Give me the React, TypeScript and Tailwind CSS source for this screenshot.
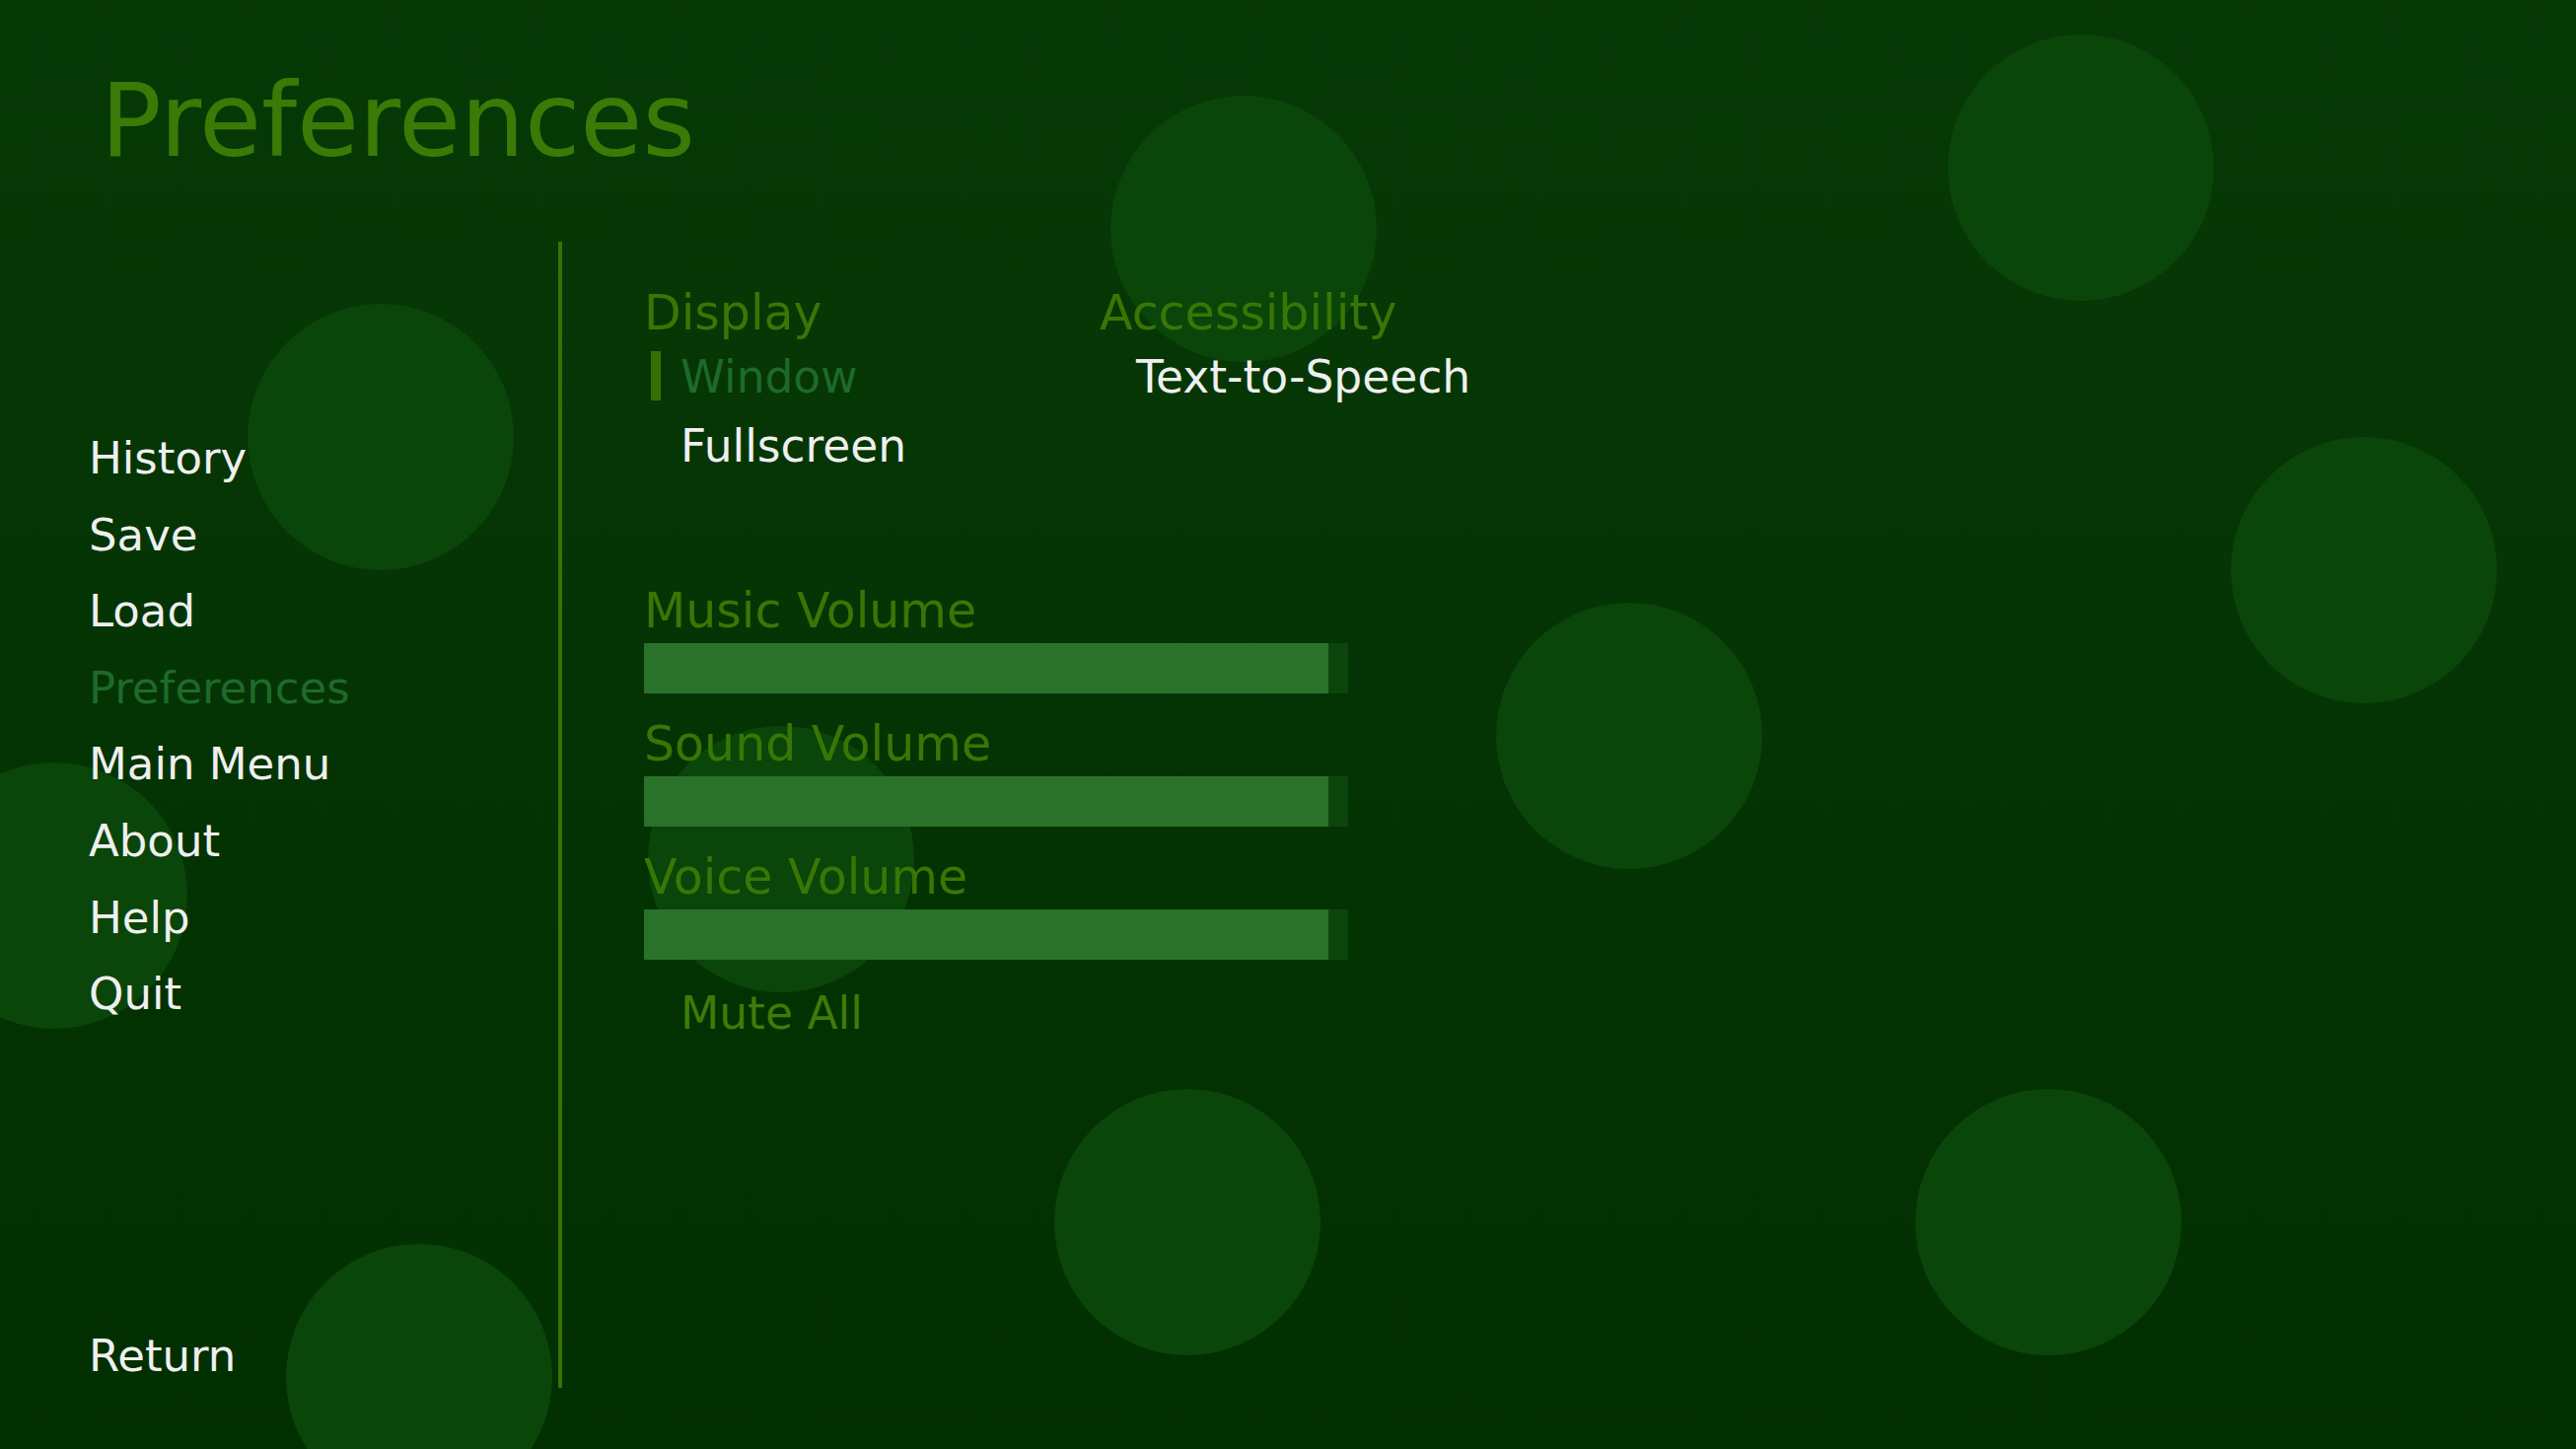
import { FC } from 'react';

const navItems = [
  { label: 'History' },
  { label: 'Save' },
  { label: 'Load' },
  { label: 'Preferences', selected: true },
  { label: 'Main Menu' },
  { label: 'About' },
  { label: 'Help' },
  { label: 'Quit' },
];

// decorative background blobs
const circles = [
  'left-[1126px] top-[97px]',
  'left-[1975px] top-[35px]',
  'left-[251px] top-[308px]',
  'left-[2262px] top-[443px]',
  'left-[1517px] top-[611px]',
  'left-[-80px] top-[773px]',
  'left-[657px] top-[736px]',
  'left-[1069px] top-[1104px]',
  'left-[1942px] top-[1104px]',
  'left-[290px] top-[1261px]',
];

const volumes = ['Music Volume', 'Sound Volume', 'Voice Volume'];

const RadioButton: FC<{ label: string; selected?: boolean }> = ({ label, selected }) => (
  <div className="relative h-[70px] pl-[37px] text-[45.5px] leading-[70px]">
    {selected && (
      <div className="absolute left-[7px] top-[8px] h-[50px] w-[10px] bg-[#376f04]" />
    )}
    <span className={selected ? 'text-[#1e6a2a]' : 'text-[#efefef]'}>{label}</span>
  </div>
);

export default function App() {
  return (
    <div
      className="relative h-[1469px] w-[2612px] overflow-hidden bg-gradient-to-b from-[#073907] to-[#022f00]"
      style={{ fontFamily: '"DejaVu Sans", Verdana, sans-serif' }}
    >
      {circles.map((pos, i) => (
        <div key={i} className={`absolute h-[270px] w-[270px] rounded-full bg-[#0a4509] ${pos}`} />
      ))}

      <div className="relative flex h-full flex-col">
        {/* Title */}
        <h1 className="pl-[102px] pt-[72px] text-[102.5px] leading-[102px] text-[#3b7a06]">
          Preferences
        </h1>

        <div className="mt-[71px] flex h-[1162px]">
          {/* Navigation */}
          <div className="flex w-[566px] flex-col pl-[90px]">
            <div className="flex flex-col pt-[181px]">
              {navItems.map((item) => (
                <div
                  key={item.label}
                  className={`h-[77.6px] text-[45px] leading-[77.6px] ${
                    item.selected ? 'text-[#1e6a2a]' : 'text-[#efefef]'
                  }`}
                >
                  {item.label}
                </div>
              ))}
            </div>
            <div className="mb-[2px] mt-auto h-[60px] text-[45px] leading-[60px] text-[#efefef]">
              Return
            </div>
          </div>

          {/* Divider */}
          <div className="w-[4px] bg-[#3a7104]" />

          {/* Content */}
          <div className="flex flex-col pl-[83px] pt-[43px]">
            <div className="flex">
              <div className="flex w-[462px] flex-col">
                <div className="h-[60px] text-[49px] leading-[60px] text-[#3a7605]">Display</div>
                <div>
                  <RadioButton label="Window" selected />
                  <RadioButton label="Fullscreen" />
                </div>
              </div>
              <div className="flex flex-col">
                <div className="h-[60px] text-[49px] leading-[60px] text-[#3a7605]">Accessibility</div>
                <div>
                  <RadioButton label="Text-to-Speech" />
                </div>
              </div>
            </div>

            <div className="mt-[102px] flex flex-col gap-[22px]">
              {volumes.map((v) => (
                <div key={v} className="flex flex-col">
                  <div className="h-[60px] text-[49px] leading-[60px] text-[#3a7605]">{v}</div>
                  <div className="mt-[2px] flex h-[51px] w-[714px] bg-[#0b450b]">
                    <div className="h-full w-[694px] bg-[#2a7229]" />
                  </div>
                </div>
              ))}
            </div>

            <div className="mt-[20px] h-[70px] pl-[37px] text-[45.5px] leading-[70px] text-[#3e7c08]">
              Mute All
            </div>
          </div>
        </div>
      </div>
    </div>
  );
}
